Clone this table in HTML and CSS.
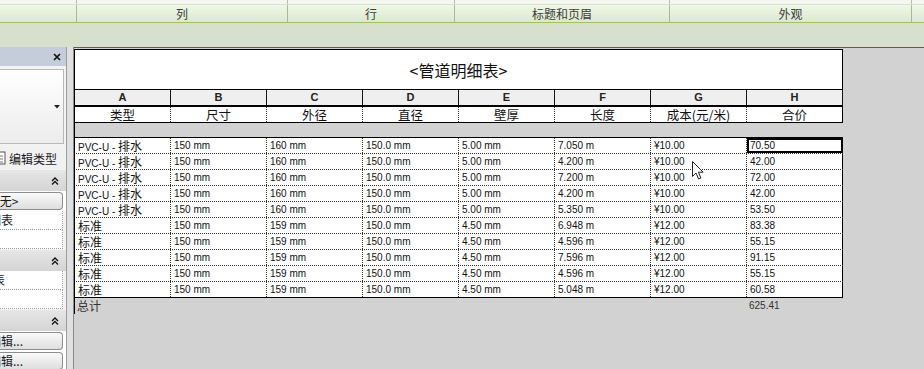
FILE: index.html
```html
<!DOCTYPE html>
<html lang="zh">
<head>
<meta charset="utf-8">
<title>管道明细表</title>
<link rel="stylesheet" href="styles.css">
</head>
<body>
<div class="app">
  <header class="ribbon">
    <div class="ribbon-top">
      <span class="rc"></span><span class="rc"></span><span class="rc"></span><span class="rc"></span><span class="rc"></span><span class="rc last"></span>
    </div>
    <div class="ribbon-panels">
      <div class="rp"></div>
      <div class="rp">列</div>
      <div class="rp">行</div>
      <div class="rp">标题和页眉</div>
      <div class="rp">外观</div>
      <div class="rp last"></div>
    </div>
  </header>
  <div class="optbar"></div>
  <div class="main">
    <aside class="props">
      <div class="props-head">
        <svg class="close-x" width="8" height="8" viewBox="0 0 8 8"><path d="M1 1 L7 7 M7 1 L1 7" stroke="#111" stroke-width="1.7" fill="none"/></svg>
      </div>
      <div class="typesel">
        <div class="typesel-box">
          <svg class="dd" width="6" height="4" viewBox="0 0 6 4"><path d="M0 0 H6 L3 3.5 Z" fill="#222"/></svg>
        </div>
      </div>
      <div class="edittype">
        <svg class="et-icon" width="7" height="14" viewBox="0 0 7 14"><rect x="-6" y="1" width="11" height="12" fill="#fff" stroke="#555"/><path d="M-4 5 H3 M-4 8 H3 M-4 11 H3" stroke="#777"/></svg>
        <span>编辑类型</span>
      </div>
      <div class="sec"><svg class="chev" width="8" height="8" viewBox="0 0 8 8"><path d="M1 4 L4 1 L7 4 M1 7.5 L4 4.5 L7 7.5" stroke="#111" stroke-width="1.3" fill="none"/></svg></div>
      <div class="btnrow"><div class="btn"><span class="clip1">&lt;无&gt;</span></div></div>
      <div class="prop"><span class="clip2">明细表</span></div>
      <div class="prop"></div>
      <div class="sec"><svg class="chev" width="8" height="8" viewBox="0 0 8 8"><path d="M1 4 L4 1 L7 4 M1 7.5 L4 4.5 L7 7.5" stroke="#111" stroke-width="1.3" fill="none"/></svg></div>
      <div class="prop"><span class="clip3">表</span></div>
      <div class="prop"></div>
      <div class="sec"><svg class="chev" width="8" height="8" viewBox="0 0 8 8"><path d="M1 4 L4 1 L7 4 M1 7.5 L4 4.5 L7 7.5" stroke="#111" stroke-width="1.3" fill="none"/></svg></div>
      <div class="btnrow"><div class="btn"><span class="clip4">编辑...</span></div></div>
      <div class="btnrow"><div class="btn"><span class="clip4">编辑...</span></div></div>
    </aside>
    <div class="splitter"></div>
    <section class="view">
      <div class="sched">
        <div class="s-title">&lt;管道明细表&gt;</div>
        <div class="s-row s-letters">
          <div>A</div><div>B</div><div>C</div><div>D</div><div>E</div><div>F</div><div>G</div><div>H</div>
        </div>
        <div class="s-row s-head">
          <div>类型</div><div>尺寸</div><div>外径</div><div>直径</div><div>壁厚</div><div>长度</div><div>成本(元/米)</div><div>合价</div>
        </div>
        <div class="s-gap"></div>
        <div class="s-body">
          <div class="s-row"><div>PVC-U - <span class="zh">排水</span></div><div>150 mm</div><div>160 mm</div><div>150.0 mm</div><div>5.00 mm</div><div>7.050 m</div><div>¥10.00</div><div class="sel">70.50</div></div>
          <div class="s-row"><div>PVC-U - <span class="zh">排水</span></div><div>150 mm</div><div>160 mm</div><div>150.0 mm</div><div>5.00 mm</div><div>4.200 m</div><div>¥10.00</div><div>42.00</div></div>
          <div class="s-row"><div>PVC-U - <span class="zh">排水</span></div><div>150 mm</div><div>160 mm</div><div>150.0 mm</div><div>5.00 mm</div><div>7.200 m</div><div>¥10.00</div><div>72.00</div></div>
          <div class="s-row"><div>PVC-U - <span class="zh">排水</span></div><div>150 mm</div><div>160 mm</div><div>150.0 mm</div><div>5.00 mm</div><div>4.200 m</div><div>¥10.00</div><div>42.00</div></div>
          <div class="s-row"><div>PVC-U - <span class="zh">排水</span></div><div>150 mm</div><div>160 mm</div><div>150.0 mm</div><div>5.00 mm</div><div>5.350 m</div><div>¥10.00</div><div>53.50</div></div>
          <div class="s-row"><div><span class="zh">标准</span></div><div>150 mm</div><div>159 mm</div><div>150.0 mm</div><div>4.50 mm</div><div>6.948 m</div><div>¥12.00</div><div>83.38</div></div>
          <div class="s-row"><div><span class="zh">标准</span></div><div>150 mm</div><div>159 mm</div><div>150.0 mm</div><div>4.50 mm</div><div>4.596 m</div><div>¥12.00</div><div>55.15</div></div>
          <div class="s-row"><div><span class="zh">标准</span></div><div>150 mm</div><div>159 mm</div><div>150.0 mm</div><div>4.50 mm</div><div>7.596 m</div><div>¥12.00</div><div>91.15</div></div>
          <div class="s-row"><div><span class="zh">标准</span></div><div>150 mm</div><div>159 mm</div><div>150.0 mm</div><div>4.50 mm</div><div>4.596 m</div><div>¥12.00</div><div>55.15</div></div>
          <div class="s-row"><div><span class="zh">标准</span></div><div>150 mm</div><div>159 mm</div><div>150.0 mm</div><div>4.50 mm</div><div>5.048 m</div><div>¥12.00</div><div>60.58</div></div>
        </div>
        <div class="s-row s-total">
          <div><span class="zh">总计</span></div><div></div><div></div><div></div><div></div><div></div><div></div><div>625.41</div>
        </div>
      </div>
      <svg class="cursor" width="13" height="20" viewBox="0 0 13 20"><path d="M0.5 0.5 L0.5 15.5 L4 12 L6.6 18 L8.9 17 L6.4 11.2 L11.2 11.2 Z" fill="#fff" stroke="#222" stroke-width="1"/></svg>
    </section>
  </div>
</div>
</body>
</html>
```

FILE: styles.css
```css
* { box-sizing: border-box; }

body {
  margin: 0;
  width: 924px;
  height: 369px;
  overflow: hidden;
  font-family: "Liberation Sans", Arial, "Noto Sans CJK SC", sans-serif;
  color: #111;
  background: #d2d2d2;
}

.app {
  width: 924px;
  height: 369px;
  display: flex;
  flex-direction: column;
}

/* ribbon */
.ribbon-top,
.ribbon-panels {
  display: grid;
  grid-template-columns: 77px 211px 167px 215px 242px 12px;
}

.ribbon-top {
  height: 4px;
  background: #f4f7f0;
}

.rc { border-right: 1px solid #b4c2a8; }
.rc.last, .rp.last { border-right: none; }

.ribbon-panels {
  height: 19px;
  background: linear-gradient(#f0f6e8, #dbe9cd);
  border-top: 1px solid #d8e4cc;
  border-bottom: 1px solid #9dc26c;
}

.rp {
  border-right: 1px solid #a8b99a;
  font-family: "Noto Sans CJK SC", sans-serif;
  font-size: 12px;
  line-height: 17px;
  text-align: center;
  color: #3c3c3c;
}

.optbar {
  height: 24px;
  background: #d7dfcd;
}

/* main */
.main {
  flex: 1;
  display: flex;
  min-height: 0;
}

.props {
  width: 67px;
  border-right: 1px solid #9c9c9c;
  background: #f3f3f3;
  display: flex;
  flex-direction: column;
  overflow: hidden;
  font-family: "Noto Sans CJK SC", sans-serif;
  font-size: 12px;
  color: #1a1a1a;
}

.props-head {
  height: 19px;
  flex: none;
  background: #c4cdd9;
  display: flex;
  align-items: center;
  justify-content: flex-end;
  padding-right: 5px;
}

.typesel {
  height: 81px;
  flex: none;
  padding: 3px 2px 3px 0;
}

.typesel-box {
  height: 100%;
  border: 1px solid #b8b8b8;
  border-left: none;
  background: linear-gradient(#ffffff, #ececec);
  display: flex;
  align-items: center;
  justify-content: flex-end;
  padding-right: 3px;
}

.edittype {
  height: 22px;
  flex: none;
  display: flex;
  align-items: center;
  gap: 2px;
  background: #f1f1f1;
  white-space: nowrap;
}

.sec {
  height: 21px;
  flex: none;
  margin-top: 1px;
  background: linear-gradient(#e6e6e6, #d4d4d4);
  display: flex;
  align-items: center;
  justify-content: flex-end;
  padding-right: 7px;
}

.btnrow {
  height: 20px;
  flex: none;
  padding: 1px 3px 1px 0;
  background: #fff;
}

.btn {
  height: 100%;
  border: 1px solid #8e8e8e;
  border-left: none;
  border-radius: 0 4px 4px 0;
  background: linear-gradient(#fafafa, #dedede);
  line-height: 16px;
  white-space: nowrap;
  overflow: hidden;
}

.prop {
  height: 19px;
  flex: none;
  margin-right: 3px;
  background: #fff;
  border-right: 1px dotted #9a9a9a;
  border-bottom: 1px dotted #9a9a9a;
  line-height: 17px;
  white-space: nowrap;
  overflow: hidden;
}

.clip1 { margin-left: -7px; }
.clip2 { margin-left: -23px; }
.clip3 { margin-left: -7px; }
.clip4 { margin-left: -11px; }

.splitter {
  width: 7px;
  flex: none;
  background: #e0e0e0;
  border-right: 1px solid #8a8a8a;
}

.view {
  flex: 1;
  position: relative;
  background: #d2d2d2;
  border-top: 1px solid #5c5c5c;
  padding-top: 1px;
}

/* schedule */
.sched {
  width: 769px;
  font-size: 10px;
}

.s-title {
  height: 41px;
  border: 1px solid #000;
  background: #fff;
  font-family: "Noto Sans CJK SC", sans-serif;
  font-size: 16px;
  display: flex;
  align-items: center;
  justify-content: center;
}

.s-row {
  display: grid;
  grid-template-columns: repeat(8, 96px);
  border-left: 1px solid #000;
}

.s-row > div {
  white-space: nowrap;
  overflow: hidden;
}

.s-letters {
  height: 15px;
  background: #efefef;
}

.s-letters > div {
  border-right: 1px solid #111;
  text-align: center;
  font-weight: bold;
  font-size: 11px;
  line-height: 15px;
  color: #222;
}

.s-head {
  height: 18px;
  background: #fff;
  border-top: 2px solid #000;
  border-bottom: 1px solid #000;
}

.s-head > div {
  border-right: 1px dotted #333;
  text-align: center;
  font-family: "Noto Sans CJK SC", sans-serif;
  font-size: 12.5px;
  line-height: 15px;
}

.s-head > div:last-child { border-right: 1px solid #000; }

.s-gap {
  height: 14px;
  border-left: 1px solid #000;
}

.s-body {
  border-top: 1px solid #000;
  background: #fff;
}

.s-body .s-row {
  height: 16px;
  border-bottom: 1px dotted #333;
}

.s-body .s-row:last-child { border-bottom: 1px solid #000; }

.s-body .s-row > div {
  border-right: 1px dotted #333;
  padding-left: 3px;
  line-height: 15px;
}

.s-body .s-row > div:last-child { border-right: 1px solid #000; }

.zh {
  font-family: "Noto Sans CJK SC", sans-serif;
  font-size: 12px;
}

.sel {
  outline: 2px solid #000;
  outline-offset: -2px;
}

.s-total {
  height: 16px;
  color: #333;
}

.s-total > div {
  padding-left: 2px;
  line-height: 15px;
}

.cursor {
  position: absolute;
  left: 618px;
  top: 113px;
}
```
